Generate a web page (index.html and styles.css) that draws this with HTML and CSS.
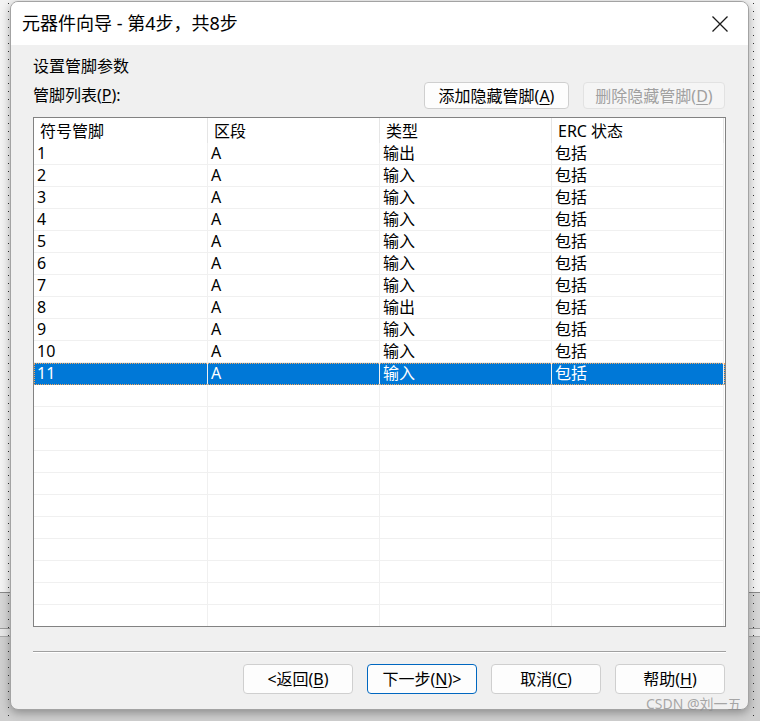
FILE: index.html
```html
<!DOCTYPE html>
<html lang="zh-CN">
<head>
<meta charset="utf-8">
<title>元器件向导</title>
<link rel="stylesheet" href="styles.css">
</head>
<body>
<div class="dialog">
  <div class="titlebar">
    <span class="title">元器件向导 - 第4步，共8步</span>
    <svg class="close" width="16" height="16" viewBox="0 0 16 16"><path d="M0.5 0.5 L15.5 15.5 M15.5 0.5 L0.5 15.5" stroke="#1a1a1a" stroke-width="1.3" fill="none"/></svg>
  </div>
  <div class="body">
    <div class="heading">设置管脚参数</div>
    <div class="listbar">
      <span class="label">管脚列表(<u>P</u>):</span>
      <div class="tools">
        <button class="btn">添加隐藏管脚(<u>A</u>)</button>
        <button class="btn" disabled>删除隐藏管脚(<u>D</u>)</button>
      </div>
    </div>
    <div class="list">
      <div class="row head"><div class="cell">符号管脚</div><div class="cell">区段</div><div class="cell">类型</div><div class="cell">ERC 状态</div></div>
      <div class="row"><div class="cell">1</div><div class="cell">A</div><div class="cell">输出</div><div class="cell">包括</div></div>
      <div class="row"><div class="cell">2</div><div class="cell">A</div><div class="cell">输入</div><div class="cell">包括</div></div>
      <div class="row"><div class="cell">3</div><div class="cell">A</div><div class="cell">输入</div><div class="cell">包括</div></div>
      <div class="row"><div class="cell">4</div><div class="cell">A</div><div class="cell">输入</div><div class="cell">包括</div></div>
      <div class="row"><div class="cell">5</div><div class="cell">A</div><div class="cell">输入</div><div class="cell">包括</div></div>
      <div class="row"><div class="cell">6</div><div class="cell">A</div><div class="cell">输入</div><div class="cell">包括</div></div>
      <div class="row"><div class="cell">7</div><div class="cell">A</div><div class="cell">输入</div><div class="cell">包括</div></div>
      <div class="row"><div class="cell">8</div><div class="cell">A</div><div class="cell">输出</div><div class="cell">包括</div></div>
      <div class="row"><div class="cell">9</div><div class="cell">A</div><div class="cell">输入</div><div class="cell">包括</div></div>
      <div class="row"><div class="cell">10</div><div class="cell">A</div><div class="cell">输入</div><div class="cell">包括</div></div>
      <div class="row selected"><div class="cell">11</div><div class="cell">A</div><div class="cell">输入</div><div class="cell">包括</div></div>
      <div class="row"><div class="cell"></div><div class="cell"></div><div class="cell"></div><div class="cell"></div></div>
      <div class="row"><div class="cell"></div><div class="cell"></div><div class="cell"></div><div class="cell"></div></div>
      <div class="row"><div class="cell"></div><div class="cell"></div><div class="cell"></div><div class="cell"></div></div>
      <div class="row"><div class="cell"></div><div class="cell"></div><div class="cell"></div><div class="cell"></div></div>
      <div class="row"><div class="cell"></div><div class="cell"></div><div class="cell"></div><div class="cell"></div></div>
      <div class="row"><div class="cell"></div><div class="cell"></div><div class="cell"></div><div class="cell"></div></div>
      <div class="row"><div class="cell"></div><div class="cell"></div><div class="cell"></div><div class="cell"></div></div>
      <div class="row"><div class="cell"></div><div class="cell"></div><div class="cell"></div><div class="cell"></div></div>
      <div class="row"><div class="cell"></div><div class="cell"></div><div class="cell"></div><div class="cell"></div></div>
      <div class="row"><div class="cell"></div><div class="cell"></div><div class="cell"></div><div class="cell"></div></div>
      <div class="row"><div class="cell"></div><div class="cell"></div><div class="cell"></div><div class="cell"></div></div>
    </div>
    <div class="sep"></div>
    <div class="footer">
      <button class="btn big">&lt;返回(<u>B</u>)</button>
      <button class="btn big default">下一步(<u>N</u>)&gt;</button>
      <button class="btn big">取消(<u>C</u>)</button>
      <button class="btn big">帮助(<u>H</u>)</button>
    </div>
  </div>
</div>
<div class="watermark">CSDN @刘一五</div>
</body>
</html>
```

FILE: styles.css
```css
html, body {
  margin: 0;
  padding: 0;
}
body {
  width: 760px;
  height: 721px;
  overflow: hidden;
  position: relative;
  font-family: "Noto Sans", "Noto Sans CJK SC", sans-serif;
  color: #000;
  background-color: #f3f3f3;
  background-image:
    linear-gradient(#333 0 1px, transparent 1px),
    linear-gradient(#333 0 1px, transparent 1px),
    linear-gradient(to bottom, transparent 592px, #8a8a8a 592px 593px, #d6d6d6 593px 628px, #9a9a9a 628px 629px, #e6e6e6 629px 636px, #a8a8a8 636px 637px, #cfcfcf 637px);
  background-size: 1px 8px, 1px 8px, 100% 100%;
  background-position: 8px 3px, 753px 3px, 0 0;
  background-repeat: repeat-y, repeat-y, no-repeat;
}
.dialog {
  position: absolute;
  left: 10px;
  top: 1px;
  width: 737px;
  height: 707px;
  border: 1px solid #a3a3a3;
  border-radius: 8px;
  background: #f0f0f0;
  box-shadow: 0 3px 10px rgba(0, 0, 0, 0.32);
  display: flex;
  flex-direction: column;
  overflow: hidden;
}
.titlebar {
  height: 42px;
  background: #fff;
  display: flex;
  align-items: center;
  justify-content: space-between;
  padding: 0 20px 1px 11px;
  flex-shrink: 0;
}
.title {
  font-size: 18px;
  line-height: 24px;
}
.close {
  display: block;
  margin-top: 1px;
}
.body {
  flex: 1;
  padding: 10px 22px 0 22px;
  display: flex;
  flex-direction: column;
  font-size: 16px;
}
.heading {
  height: 22px;
  line-height: 22px;
}
.listbar {
  margin-top: 5px;
  height: 27px;
  display: flex;
  align-items: center;
  justify-content: space-between;
}
.label {
  padding-bottom: 3px;
}
.tools {
  display: flex;
  gap: 14px;
  margin-right: 1px;
}
.btn {
  font-family: "Noto Sans", "Noto Sans CJK SC", sans-serif;
  font-size: 16px;
  color: #000;
  background: #fdfdfd;
  border: 1px solid #cfcfcf;
  border-radius: 4px;
  height: 27px;
  padding: 0;
  line-height: 24px;
}
.btn u {
  text-underline-offset: 2px;
}
.tools .btn:first-child {
  width: 145px;
}
.tools .btn:last-child {
  width: 142px;
}
.btn[disabled] {
  color: #a0a0a0;
  background: #f5f5f5;
  border-color: #e2e2e2;
}
.list {
  margin-top: 8px;
  height: 508px;
  border: 1px solid #828282;
  background: #fff;
  overflow: hidden;
}
.row {
  display: grid;
  grid-template-columns: 174px 172px 172px 172px;
  height: 22px;
}
.cell {
  border-right: 1px solid #f0f0f0;
  border-bottom: 1px solid #f0f0f0;
  padding-left: 3px;
  line-height: 20px;
  white-space: nowrap;
}
.row.head {
  height: 25px;
}
.row.head .cell {
  border-bottom: none;
  border-right-color: #e5e5e5;
  padding-left: 6px;
  line-height: 26px;
}
.row.selected {
  background: #0078d7;
  color: #fff;
  outline: 1px dotted #f5a65b;
  outline-offset: -1px;
}
.row.selected .cell {
  border-bottom-color: #0078d7;
}
.sep {
  margin-top: 24px;
  height: 1px;
  background: #a0a0a0;
  border-bottom: 1px solid #fff;
}
.footer {
  margin-top: 11px;
  display: flex;
  justify-content: flex-end;
  gap: 14px;
  margin-right: 1px;
}
.btn.big {
  width: 110px;
  height: 30px;
  line-height: 27px;
}
.btn.default {
  border-color: #0067c0;
}
.watermark {
  position: absolute;
  left: 646px;
  top: 694px;
  font-size: 14px;
  line-height: 20px;
  color: rgba(140, 140, 140, 0.75);
  white-space: nowrap;
}
```
